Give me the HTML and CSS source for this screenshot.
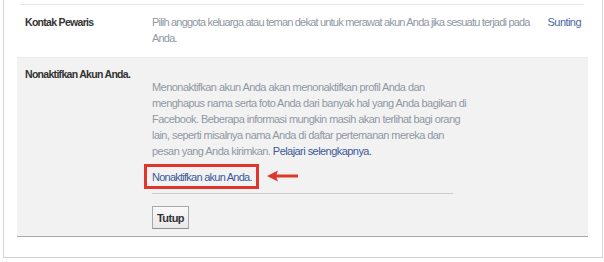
FILE: index.html
```html
<!DOCTYPE html>
<html lang="id">
<head>
<meta charset="utf-8">
<title>Pengaturan Akun</title>
<link rel="stylesheet" href="styles.css">
</head>
<body>
<div class="panel">
  <div class="top-line"></div>
  <div class="row">
    <div class="label">Kontak Pewaris</div>
    <div class="desc desc-lines desc-tight">Pilih anggota keluarga atau teman dekat untuk merawat akun Anda jika sesuatu terjadi pada<br>Anda.</div>
    <a class="edit" href="#">Sunting</a>
  </div>
  <div class="row row-open">
    <div class="label">Nonaktifkan Akun Anda.</div>
    <div class="content">
      <p class="desc desc-lines">Menonaktifkan akun Anda akan menonaktifkan profil Anda dan<br>menghapus nama serta foto Anda dari banyak hal yang Anda bagikan di<br>Facebook. Beberapa informasi mungkin masih akan terlihat bagi orang<br>lain, seperti misalnya nama Anda di daftar pertemanan mereka dan<br>pesan yang Anda kirimkan. <a class="link" href="#">Pelajari selengkapnya.</a></p>
      <div class="action">
        <span class="callout">
          <a class="link link-tight" href="#">Nonaktifkan akun Anda.</a>
          <svg class="arrow" width="32" height="12" viewBox="0 0 32 12" aria-hidden="true">
            <path d="M0 6 L11 0.5 L9.5 4.6 L31 4.6 L31 7.4 L9.5 7.4 L11 11.5 Z" fill="#e2362c"/>
          </svg>
        </span>
      </div>
      <div class="divider"></div>
      <button class="btn" type="button">Tutup</button>
    </div>
  </div>
</div>
</body>
</html>
```

FILE: styles.css
```css
html, body {
  margin: 0;
  padding: 0;
  background: #ffffff;
}

body {
  font-family: "Liberation Sans", Arial, sans-serif;
  font-size: 11px;
  line-height: 16px;
  letter-spacing: -0.55px;
  color: #333333;
}

.panel {
  box-sizing: border-box;
  width: 600px;
  margin-left: 3px;
  padding: 4px 14px 20px 13px;
  border-left: 1px solid #d6d6d6;
  border-right: 1px solid #d6d6d6;
  border-bottom: 1px solid #d0d0d0;
}

.top-line {
  margin: 0 4px 0 3px;
  border-top: 1px solid #e6e6e6;
}

.row {
  display: flex;
  align-items: flex-start;
  padding: 9px 7px 11px 8px;
}

.label {
  flex: 0 0 127px;
  font-size: 10.5px;
  font-weight: 700;
  letter-spacing: -0.7px;
  color: #333333;
}

.desc {
  margin: 0;
  color: #9197a3;
}

.desc-lines {
  white-space: nowrap;
}

.desc-tight {
  flex: 0 0 auto;
  letter-spacing: -0.8px;
}

.edit {
  margin-left: auto;
  color: #4a66a0;
  text-decoration: none;
}

.row-open {
  background: #f2f2f2;
  border-top: 1px solid #ececec;
  border-bottom: 1px solid #a9a9a9;
  padding: 8px 7px 7px 8px;
}

.content {
  width: 301px;
  padding-top: 13px;
}

.link {
  color: #3b5998;
  text-decoration: none;
}

.link-tight {
  letter-spacing: -0.75px;
}

.action {
  margin-top: 10px;
}

.callout {
  position: relative;
  display: inline-block;
}

.callout::before {
  content: "";
  position: absolute;
  left: -8px;
  right: -7px;
  top: -5px;
  bottom: -4px;
  border: 3px solid #e0352c;
}

.arrow {
  position: absolute;
  left: calc(100% + 15px);
  top: 1px;
}

.divider {
  margin-top: 8px;
  border-top: 1px solid #cccccc;
}

.btn {
  display: block;
  margin-top: 12px;
  height: 23px;
  padding: 0 4px;
  font-family: inherit;
  font-size: 11px;
  font-weight: 700;
  letter-spacing: -0.55px;
  color: #333333;
  background: linear-gradient(#f9f9f9, #e9e9e9);
  border: 1px solid #a8a8a8;
  border-bottom-color: #8f8f8f;
  border-radius: 0;
}
```
